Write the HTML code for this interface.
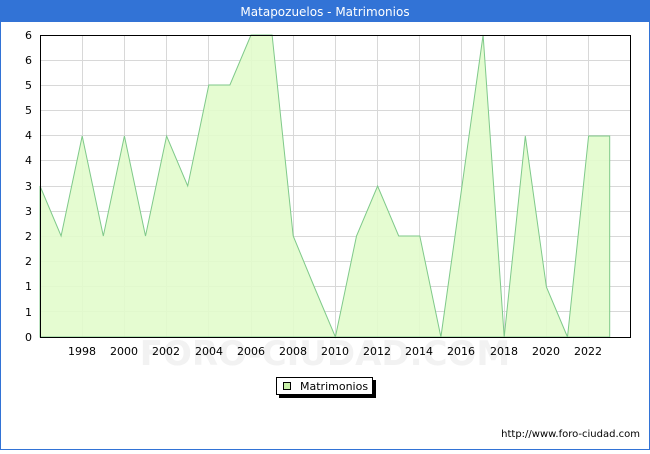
<!DOCTYPE html>
<html><head><style>
body{margin:0;width:650px;height:450px;overflow:hidden;background:#fff;font-family:"DejaVu Sans","Liberation Sans",sans-serif}
</style></head><body>
<svg width="650" height="450" xmlns="http://www.w3.org/2000/svg" font-family="DejaVu Sans, Liberation Sans, sans-serif">
<rect x="0.5" y="0.5" width="649" height="449" fill="#fff" stroke="#3273d6"/>
<rect x="0" y="0" width="650" height="22" fill="#3273d6"/>
<text x="325" y="16" fill="#fff" font-size="12" text-anchor="middle">Matapozuelos - Matrimonios</text>
<text x="325" y="365" fill="#f2f2f2" font-size="34" text-anchor="middle" font-weight="bold">FORO-CIUDAD.COM</text>
<g stroke="#d8d8d8" stroke-width="1">
<line x1="40" x2="630" y1="311.5" y2="311.5"/><line x1="40" x2="630" y1="286.5" y2="286.5"/><line x1="40" x2="630" y1="261.5" y2="261.5"/><line x1="40" x2="630" y1="236.5" y2="236.5"/><line x1="40" x2="630" y1="211.5" y2="211.5"/><line x1="40" x2="630" y1="186.5" y2="186.5"/><line x1="40" x2="630" y1="160.5" y2="160.5"/><line x1="40" x2="630" y1="135.5" y2="135.5"/><line x1="40" x2="630" y1="110.5" y2="110.5"/><line x1="40" x2="630" y1="85.5" y2="85.5"/><line x1="40" x2="630" y1="60.5" y2="60.5"/>
<line y1="35" y2="337" x1="82.5" x2="82.5"/><line y1="35" y2="337" x1="124.5" x2="124.5"/><line y1="35" y2="337" x1="166.5" x2="166.5"/><line y1="35" y2="337" x1="208.5" x2="208.5"/><line y1="35" y2="337" x1="251.5" x2="251.5"/><line y1="35" y2="337" x1="293.5" x2="293.5"/><line y1="35" y2="337" x1="335.5" x2="335.5"/><line y1="35" y2="337" x1="377.5" x2="377.5"/><line y1="35" y2="337" x1="419.5" x2="419.5"/><line y1="35" y2="337" x1="461.5" x2="461.5"/><line y1="35" y2="337" x1="504.5" x2="504.5"/><line y1="35" y2="337" x1="546.5" x2="546.5"/><line y1="35" y2="337" x1="588.5" x2="588.5"/>
</g>
<polygon fill="#e2fccc" fill-opacity="0.9" stroke="#7fc98a" stroke-width="1" points="40,337 40,186 61.1,236 82.2,136 103.3,236 124.4,136 145.5,236 166.6,136 187.7,186 208.8,85 229.9,85 251,35 272.1,35 293.2,236 314.3,287 335.4,337 356.5,236 377.6,186 398.7,236 419.8,236 440.9,337 462,186 483.1,35 504.2,337 525.3,136 546.4,287 567.5,337 588.6,136 609.7,136 609.7,337"/>
<rect x="40.5" y="35.5" width="590" height="302" fill="none" stroke="#000"/>
<g font-size="11" fill="#000" text-anchor="end">
<text x="32" y="341">0</text><text x="32" y="316">1</text><text x="32" y="290">1</text><text x="32" y="265">2</text><text x="32" y="240">2</text><text x="32" y="215">3</text><text x="32" y="190">3</text><text x="32" y="164">4</text><text x="32" y="139">4</text><text x="32" y="114">5</text><text x="32" y="89">5</text><text x="32" y="64">6</text><text x="32" y="39">6</text>
</g>
<g font-size="11" fill="#000" text-anchor="middle">
<text x="82" y="355">1998</text><text x="124" y="355">2000</text><text x="166" y="355">2002</text><text x="209" y="355">2004</text><text x="251" y="355">2006</text><text x="293" y="355">2008</text><text x="335" y="355">2010</text><text x="377" y="355">2012</text><text x="419" y="355">2014</text><text x="461" y="355">2016</text><text x="504" y="355">2018</text><text x="546" y="355">2020</text><text x="588" y="355">2022</text>
</g>
<rect x="279" y="380" width="97" height="18" fill="#000"/>
<rect x="276.5" y="377.5" width="96" height="17" fill="#fff" stroke="#000"/>
<rect x="283.5" y="382.5" width="7" height="7" fill="#c8f0a8" stroke="#000"/>
<text x="300" y="390" font-size="11">Matrimonios</text>
<text x="640" y="437" font-size="10" text-anchor="end">http://www.foro-ciudad.com</text>
</svg>
</body></html>
